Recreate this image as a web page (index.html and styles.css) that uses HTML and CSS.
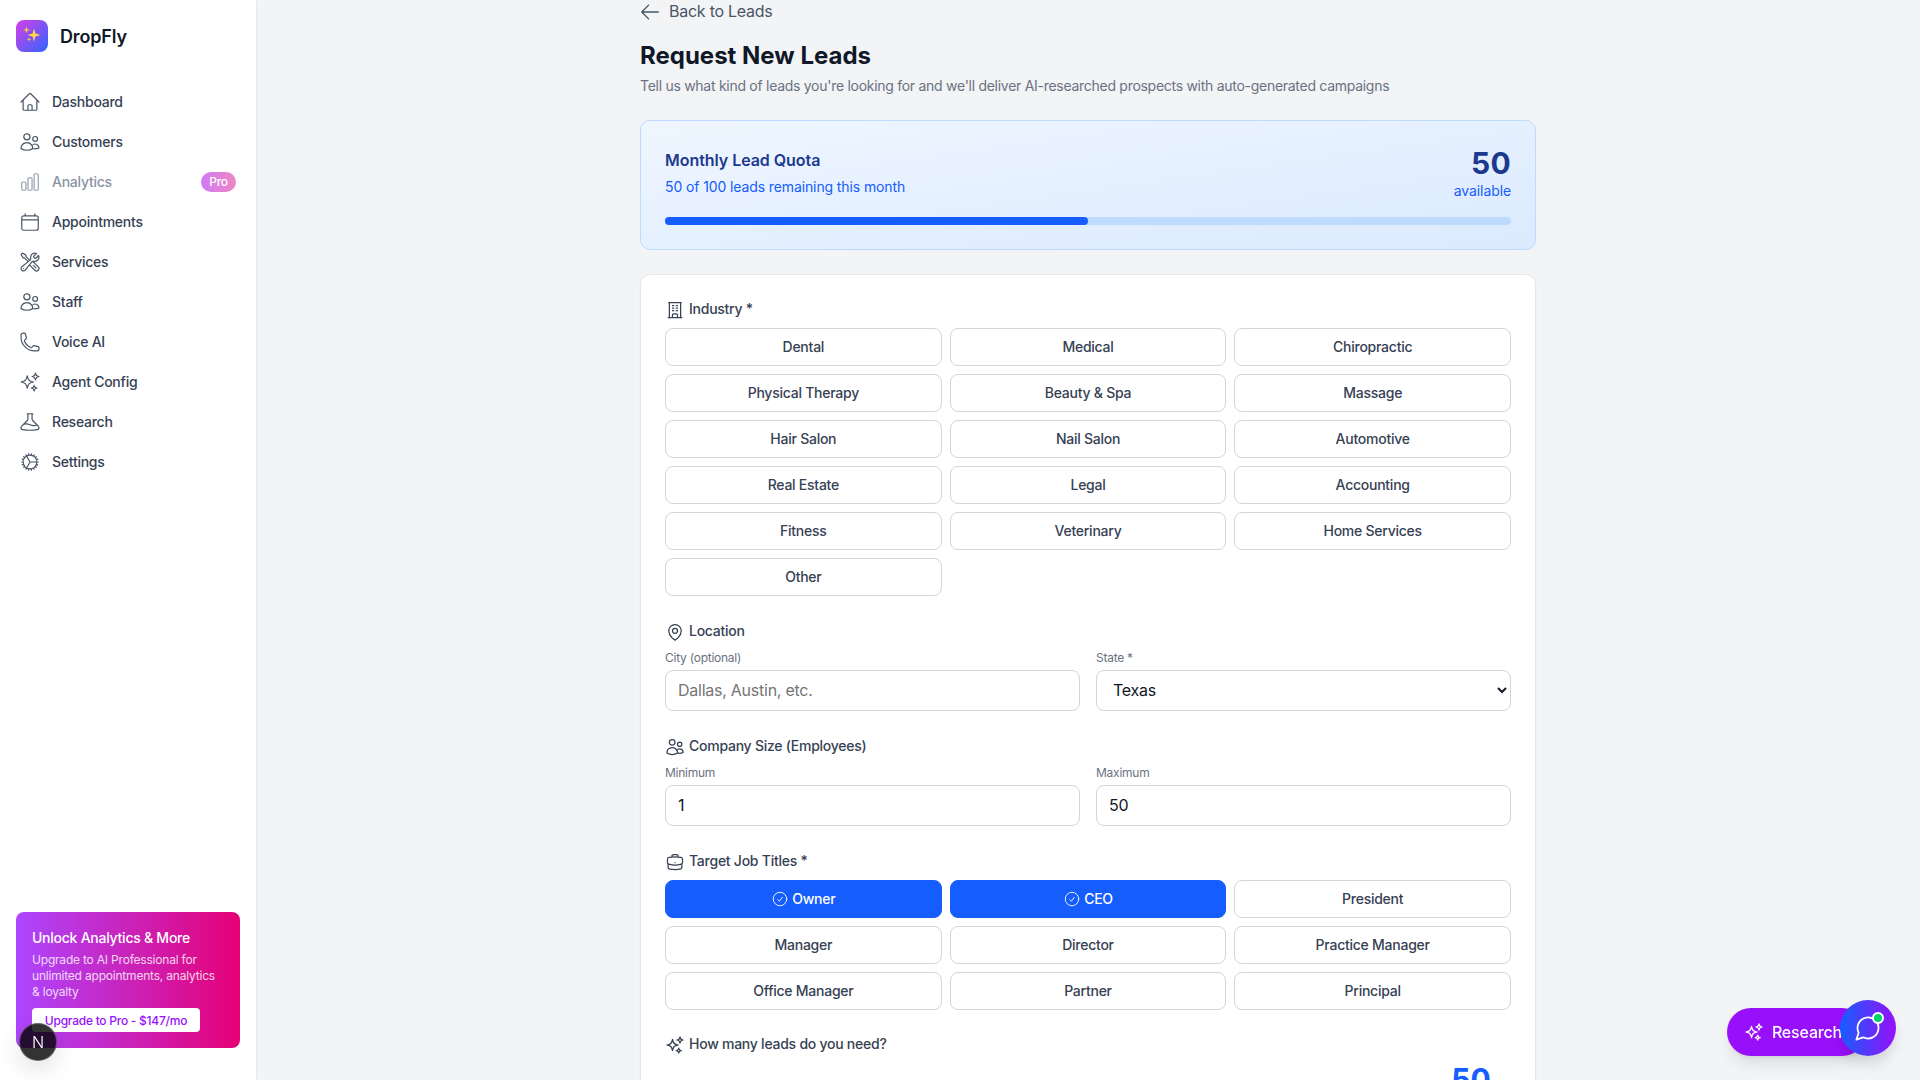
FILE: index.html
```html
<!DOCTYPE html>
<html lang="en">
<head>
    <meta charset="UTF-8">
    <meta name="viewport" content="width=device-width, initial-scale=1.0">
    <title>Request New Leads - DropFly</title>
    <link rel="stylesheet" href="styles.css">
</head>
<body>
    <!-- Icon sprite -->
    <svg class="sprite" xmlns="http://www.w3.org/2000/svg">
        <symbol id="i-home" viewBox="0 0 24 24"><path d="m2.25 12 8.954-8.955c.44-.439 1.152-.439 1.591 0L21.75 12M4.5 9.75v10.125c0 .621.504 1.125 1.125 1.125H9.75v-4.875c0-.621.504-1.125 1.125-1.125h2.25c.621 0 1.125.504 1.125 1.125V21h4.125c.621 0 1.125-.504 1.125-1.125V9.75M8.25 21h8.25"/></symbol>
        <symbol id="i-users" viewBox="0 0 24 24"><path d="M15 19.128a9.38 9.38 0 0 0 2.625.372 9.337 9.337 0 0 0 4.121-.952 4.125 4.125 0 0 0-7.533-2.493M15 19.128v-.003c0-1.113-.285-2.16-.786-3.07M15 19.128v.106A12.318 12.318 0 0 1 8.624 21c-2.331 0-4.512-.645-6.374-1.766l-.001-.109a6.375 6.375 0 0 1 11.964-3.07M12 6.375a3.375 3.375 0 1 1-6.75 0 3.375 3.375 0 0 1 6.75 0Zm8.25 2.25a2.625 2.625 0 1 1-5.25 0 2.625 2.625 0 0 1 5.25 0Z"/></symbol>
        <symbol id="i-chart" viewBox="0 0 24 24"><path d="M3 13.125C3 12.504 3.504 12 4.125 12h2.25c.621 0 1.125.504 1.125 1.125v6.75C7.5 20.496 6.996 21 6.375 21h-2.25A1.125 1.125 0 0 1 3 19.875v-6.75ZM9.75 8.625c0-.621.504-1.125 1.125-1.125h2.25c.621 0 1.125.504 1.125 1.125v11.25c0 .621-.504 1.125-1.125 1.125h-2.25a1.125 1.125 0 0 1-1.125-1.125V8.625ZM16.5 4.125c0-.621.504-1.125 1.125-1.125h2.25C20.496 3 21 3.504 21 4.125v15.75c0 .621-.504 1.125-1.125 1.125h-2.25a1.125 1.125 0 0 1-1.125-1.125V4.125Z"/></symbol>
        <symbol id="i-calendar" viewBox="0 0 24 24"><path d="M6.750 3v2.25M17.25 3v2.25M3 18.75V7.500a2.25 2.25 0 0 1 2.25-2.25h13.5A2.25 2.25 0 0 1 21 7.500v11.25m-18 0A2.25 2.25 0 0 0 5.250 21h13.5A2.25 2.25 0 0 0 21 18.75m-18 0v-9h18v9"/></symbol>
        <symbol id="i-tools" viewBox="0 0 24 24"><path d="M11.42 15.17 17.25 21A2.652 2.652 0 0 0 21 17.25l-5.877-5.877M11.42 15.17l2.496-3.03c.317-.384.74-.626 1.208-.766M11.42 15.17l-4.655 5.653a2.548 2.548 0 1 1-3.586-3.586l6.837-5.63m5.108-.233c.55-.164 1.163-.188 1.743-.14a4.5 4.5 0 0 0 4.486-6.336l-3.276 3.277a3.004 3.004 0 0 1-2.25-2.25l3.276-3.276a4.5 4.5 0 0 0-6.336 4.486c.091 1.076-.071 2.264-.904 2.95l-.102.085m-1.745 1.437L5.909 7.5H4.5L2.25 3.75l1.5-1.5L7.5 4.5v1.409l4.26 4.26m-1.745 1.437 1.745-1.437m6.615 8.206L15.75 15.75M4.867 19.125h.008v.008h-.008v-.008Z"/></symbol>
        <symbol id="i-phone" viewBox="0 0 24 24"><path d="M2.25 6.75c0 8.284 6.716 15 15 15h2.25a2.25 2.25 0 0 0 2.25-2.25v-1.372c0-.516-.351-.966-.852-1.091l-4.423-1.106c-.44-.11-.902.055-1.173.417l-.97 1.293c-.282.376-.769.542-1.21.38a12.035 12.035 0 0 1-7.143-7.143c-.162-.441.004-.928.38-1.21l1.293-.97c.363-.271.527-.734.417-1.173L6.963 3.102a1.125 1.125 0 0 0-1.091-.852H4.5A2.25 2.25 0 0 0 2.25 4.500v2.25Z"/></symbol>
        <symbol id="i-sparkles" viewBox="0 0 24 24"><path d="M9.813 15.904 9 18.75l-.813-2.846a4.5 4.5 0 0 0-3.09-3.09L2.25 12l2.846-.813a4.5 4.5 0 0 0 3.09-3.09L9 5.25l.813 2.846a4.5 4.5 0 0 0 3.09 3.09L15.75 12l-2.846.813a4.5 4.5 0 0 0-3.09 3.09ZM18.259 8.715 18 9.75l-.259-1.035a3.375 3.375 0 0 0-2.455-2.456L14.25 6l1.036-.259a3.375 3.375 0 0 0 2.455-2.456L18 2.25l.259 1.035a3.375 3.375 0 0 0 2.456 2.456L21.75 6l-1.035.259a3.375 3.375 0 0 0-2.456 2.456ZM16.894 20.567 16.5 21.75l-.394-1.183a2.25 2.25 0 0 0-1.423-1.423L13.5 18.75l1.183-.394a2.25 2.25 0 0 0 1.423-1.423l.394-1.183.394 1.183a2.25 2.25 0 0 0 1.423 1.423l1.183.394-1.183.394a2.25 2.25 0 0 0-1.423 1.423Z"/></symbol>
        <symbol id="i-beaker" viewBox="0 0 24 24"><path d="M9.750 3.104v5.714a2.25 2.25 0 0 1-.659 1.591L5 14.5M9.750 3.104c-.251.023-.501.05-.75.082m.75-.082a24.301 24.301 0 0 1 4.5 0m0 0v5.714c0 .597.237 1.17.659 1.591L19.8 15.3M14.25 3.104c.251.023.501.05.75.082M19.8 15.3l-1.57.393A9.065 9.065 0 0 1 12 15a9.065 9.065 0 0 0-6.23-.693L5 14.5m14.8.8 1.402 1.402c1.232 1.232.65 3.318-1.067 3.611A48.309 48.309 0 0 1 12 21c-2.773 0-5.491-.235-8.135-.687-1.718-.293-2.3-2.379-1.067-3.61L5 14.5"/></symbol>
        <symbol id="i-cog" viewBox="0 0 24 24"><path d="M4.500 12a7.5 7.5 0 0 0 15 0m-15 0a7.5 7.5 0 1 1 15 0m-15 0H3m16.5 0H21m-1.5 0H12m-8.457 3.077 1.41-.513m14.095-5.13 1.41-.513M5.106 17.785l1.15-.964m11.49-9.642 1.149-.964M7.501 19.795l.75-1.3m7.5-12.99.75-1.3m-6.063 16.658.26-1.477m2.605-14.772.26-1.477m0 17.726-.26-1.477M10.698 4.614l-.26-1.477M16.5 19.794l-.75-1.299M7.500 4.205 12 12m6.894 5.785-1.149-.964M6.256 7.178l-1.15-.964m15.352 8.864-1.41-.513M4.954 9.435l-1.41-.514M12.002 12l-3.75 6.495"/></symbol>
        <symbol id="i-back" viewBox="0 0 24 24"><path d="M10.5 19.5 3 12m0 0 7.5-7.5M3 12h18"/></symbol>
        <symbol id="i-building" viewBox="0 0 24 24"><path d="M3.750 21h16.5M4.500 3h15M5.250 3v18m13.5-18v18M9 6.750h1.5m-1.5 3h1.5m-1.5 3h1.5m3-6H15m-1.5 3H15m-1.5 3H15M9 21v-3.375c0-.621.504-1.125 1.125-1.125h3.75c.621 0 1.125.504 1.125 1.125V21"/></symbol>
        <symbol id="i-pin" viewBox="0 0 24 24"><path d="M15 10.5a3 3 0 1 1-6 0 3 3 0 0 1 6 0Z"/><path d="M19.5 10.5c0 7.142-7.5 11.25-7.5 11.25S4.500 17.642 4.500 10.5a7.5 7.5 0 1 1 15 0Z"/></symbol>
        <symbol id="i-briefcase" viewBox="0 0 24 24"><path d="M20.25 14.15v4.25c0 1.094-.787 2.036-1.872 2.18-2.087.277-4.216.42-6.378.42s-4.291-.143-6.378-.42c-1.085-.144-1.872-1.086-1.872-2.18v-4.25m16.5 0a2.18 2.18 0 0 0 .75-1.661V8.706c0-1.081-.768-2.015-1.837-2.175a48.114 48.114 0 0 0-3.413-.387m4.5 8.006c-.194.165-.42.295-.673.38A23.978 23.978 0 0 1 12 15.75c-2.648 0-5.195-.429-7.577-1.22a2.016 2.016 0 0 1-.673-.38m0 0A2.18 2.18 0 0 1 3 12.489V8.706c0-1.081.768-2.015 1.837-2.175a48.111 48.111 0 0 1 3.413-.387m7.5 0V5.250A2.25 2.25 0 0 0 13.5 3h-3a2.25 2.25 0 0 0-2.25 2.25v.894m7.5 0a48.667 48.667 0 0 0-7.5 0M12 12.75h.008v.008H12v-.008Z"/></symbol>
        <symbol id="i-check" viewBox="0 0 24 24"><path d="M9 12.75 11.25 15 15 9.750M21 12a9 9 0 1 1-18 0 9 9 0 0 1 18 0Z"/></symbol>
        <symbol id="i-chat" viewBox="0 0 24 24"><path d="M7.9 20A9 9 0 1 0 4 16.1L2 22Z"/></symbol>
    </svg>

    <div class="app">
        <aside class="sidebar">
            <div class="brand">
                <span class="brand-logo">
                    <svg viewBox="0 0 32 32" width="32" height="32">
                        <path class="star" d="M18 8.5l1.4 5.1 5.1 1.4-5.1 1.4-1.4 5.1-1.4-5.1-5.1-1.4 5.1-1.4z"/>
                        <path class="star-sm" d="M10.5 6.500l.8 2.700 2.700.8-2.700.8-.8 2.700-.8-2.700-2.700-.8 2.700-.8z"/>
                        <path class="star-sm" d="M13 17l.6 1.900 1.900.6-1.900.6-.6 1.900-.6-1.900-1.900-.6 1.900-.6z"/>
                    </svg>
                </span>
                <span class="brand-name">DropFly</span>
            </div>

            <nav class="nav">
                <a href="#" class="nav-link"><svg class="nav-icon"><use href="#i-home"/></svg>Dashboard</a>
                <a href="#" class="nav-link"><svg class="nav-icon"><use href="#i-users"/></svg>Customers</a>
                <a href="#" class="nav-link locked"><svg class="nav-icon"><use href="#i-chart"/></svg>Analytics<span class="pro-badge">Pro</span></a>
                <a href="#" class="nav-link"><svg class="nav-icon"><use href="#i-calendar"/></svg>Appointments</a>
                <a href="#" class="nav-link"><svg class="nav-icon"><use href="#i-tools"/></svg>Services</a>
                <a href="#" class="nav-link"><svg class="nav-icon"><use href="#i-users"/></svg>Staff</a>
                <a href="#" class="nav-link"><svg class="nav-icon"><use href="#i-phone"/></svg>Voice AI</a>
                <a href="#" class="nav-link"><svg class="nav-icon"><use href="#i-sparkles"/></svg>Agent Config</a>
                <a href="#" class="nav-link"><svg class="nav-icon"><use href="#i-beaker"/></svg>Research</a>
                <a href="#" class="nav-link"><svg class="nav-icon"><use href="#i-cog"/></svg>Settings</a>
            </nav>

            <div class="promo">
                <h3>Unlock Analytics &amp; More</h3>
                <p>Upgrade to AI Professional for unlimited appointments, analytics &amp; loyalty</p>
                <button class="promo-btn">Upgrade to Pro - $147/mo</button>
            </div>
        </aside>

        <main class="main">
            <div class="content">
                <a href="#" class="back-link"><svg class="back-icon"><use href="#i-back"/></svg>Back to Leads</a>
                <h1>Request New Leads</h1>
                <p class="subtitle">Tell us what kind of leads you're looking for and we'll deliver AI-researched prospects with auto-generated campaigns</p>

                <section class="quota">
                    <div class="quota-head">
                        <div>
                            <h2>Monthly Lead Quota</h2>
                            <p class="quota-note">50 of 100 leads remaining this month</p>
                        </div>
                        <div class="quota-count">
                            <strong>50</strong>
                            <span>available</span>
                        </div>
                    </div>
                    <div class="bar"><div class="bar-fill" style="width: 50%"></div></div>
                </section>

                <form class="form-card">
                    <div class="field">
                        <label class="field-label"><svg class="label-icon"><use href="#i-building"/></svg>Industry *</label>
                        <div class="choices">
                            <button type="button" class="choice">Dental</button>
                            <button type="button" class="choice">Medical</button>
                            <button type="button" class="choice">Chiropractic</button>
                            <button type="button" class="choice">Physical Therapy</button>
                            <button type="button" class="choice">Beauty &amp; Spa</button>
                            <button type="button" class="choice">Massage</button>
                            <button type="button" class="choice">Hair Salon</button>
                            <button type="button" class="choice">Nail Salon</button>
                            <button type="button" class="choice">Automotive</button>
                            <button type="button" class="choice">Real Estate</button>
                            <button type="button" class="choice">Legal</button>
                            <button type="button" class="choice">Accounting</button>
                            <button type="button" class="choice">Fitness</button>
                            <button type="button" class="choice">Veterinary</button>
                            <button type="button" class="choice">Home Services</button>
                            <button type="button" class="choice">Other</button>
                        </div>
                    </div>

                    <div class="field">
                        <label class="field-label"><svg class="label-icon"><use href="#i-pin"/></svg>Location</label>
                        <div class="two-col">
                            <div>
                                <label class="small-label">City (optional)</label>
                                <input type="text" class="text-input" placeholder="Dallas, Austin, etc.">
                            </div>
                            <div>
                                <label class="small-label">State *</label>
                                <select class="select-input">
                                    <option>Texas</option>
                                </select>
                            </div>
                        </div>
                    </div>

                    <div class="field">
                        <label class="field-label"><svg class="label-icon"><use href="#i-users"/></svg>Company Size (Employees)</label>
                        <div class="two-col">
                            <div>
                                <label class="small-label">Minimum</label>
                                <input type="text" class="text-input" value="1">
                            </div>
                            <div>
                                <label class="small-label">Maximum</label>
                                <input type="text" class="text-input" value="50">
                            </div>
                        </div>
                    </div>

                    <div class="field">
                        <label class="field-label"><svg class="label-icon"><use href="#i-briefcase"/></svg>Target Job Titles *</label>
                        <div class="choices">
                            <button type="button" class="choice selected"><svg class="check-icon"><use href="#i-check"/></svg>Owner</button>
                            <button type="button" class="choice selected"><svg class="check-icon"><use href="#i-check"/></svg>CEO</button>
                            <button type="button" class="choice">President</button>
                            <button type="button" class="choice">Manager</button>
                            <button type="button" class="choice">Director</button>
                            <button type="button" class="choice">Practice Manager</button>
                            <button type="button" class="choice">Office Manager</button>
                            <button type="button" class="choice">Partner</button>
                            <button type="button" class="choice">Principal</button>
                        </div>
                    </div>

                    <div class="field">
                        <label class="field-label"><svg class="label-icon"><use href="#i-sparkles"/></svg>How many leads do you need?</label>
                        <div class="lead-count">50</div>
                    </div>
                </form>
            </div>
        </main>
    </div>

    <!-- Floating widgets -->
    <div class="dev-badge">N</div>
    <button class="research-pill"><svg class="pill-icon"><use href="#i-sparkles"/></svg>Research</button>
    <button class="chat-btn">
        <svg class="chat-icon"><use href="#i-chat"/></svg>
        <span class="chat-dot"></span>
    </button>
</body>
</html>
```

FILE: styles.css
```css
/* General Styles */
* {
    margin: 0;
    padding: 0;
    box-sizing: border-box;
}

html, body {
    height: 100%;
    overflow: hidden;
}

body {
    font-family: 'Inter', 'Liberation Sans', sans-serif;
    background-color: #f3f4f6;
    color: #101828;
    letter-spacing: -0.25px;
}

button, input, select {
    font-family: inherit;
    letter-spacing: inherit;
}

a {
    text-decoration: none;
}

.sprite {
    display: none;
}

svg use {
    fill: none;
    stroke: currentColor;
    stroke-width: 1.5;
    stroke-linecap: round;
    stroke-linejoin: round;
}

.app {
    display: flex;
    height: 100vh;
}

/* Sidebar */
.sidebar {
    width: 256px;
    flex-shrink: 0;
    display: flex;
    flex-direction: column;
    background-color: #fff;
    box-shadow: 1px 0 2px rgba(0, 0, 0, 0.05);
}

.brand {
    display: flex;
    align-items: center;
    gap: 12px;
    padding: 20px 16px 30px;
}

.brand-logo {
    width: 32px;
    height: 32px;
    border-radius: 8px;
    background: linear-gradient(135deg, #d63ee8, #2f66ff);
}

.brand-logo svg {
    display: block;
}

.star {
    fill: #ffd84a;
}

.star-sm {
    fill: #ffc93a;
}

.brand-name {
    font-size: 18px;
    font-weight: 600;
    color: #101828;
    letter-spacing: -0.15px;
}

.nav {
    padding: 0 12px;
}

.nav-link {
    display: flex;
    align-items: center;
    gap: 11px;
    height: 40px;
    padding: 0 8px 1px 7px;
    font-size: 14px;
    font-weight: 450;
    color: #364153;
}

.nav-icon {
    width: 22px;
    height: 22px;
    flex-shrink: 0;
    color: #4a5565;
}

.nav-icon use {
    stroke-width: 1.3;
}

.nav-link.locked {
    color: #8a93a3;
}

.nav-link.locked .nav-icon {
    color: #99a1af;
}

.pro-badge {
    margin-left: auto;
    width: 35px;
    height: 20px;
    line-height: 20px;
    text-align: center;
    font-size: 12px;
    color: #fff;
    border-radius: 10px;
    background: linear-gradient(to right, #cf7bf6, #ef86c4);
}

.promo {
    margin: auto 16px 32px;
    padding: 16px;
    border-radius: 8px;
    color: #fff;
    background: linear-gradient(to right, #ad46ff, #e60076);
}

.promo h3 {
    font-size: 14px;
    line-height: 20px;
    font-weight: 450;
    margin-bottom: 4px;
}

.promo p {
    padding-right: 6px;
    font-size: 12px;
    line-height: 16px;
    letter-spacing: -0.2px;
    opacity: 0.8;
    margin-bottom: 8px;
}

.promo-btn {
    display: block;
    width: 168px;
    height: 24px;
    border: none;
    border-radius: 4px;
    background-color: #fff;
    color: #9810fa;
    font-size: 12px;
    font-weight: 450;
}

/* Main content */
.main {
    flex: 1;
    overflow: hidden;
}

.content {
    width: 896px;
    margin: 0 auto;
}

.back-link {
    display: flex;
    align-items: center;
    gap: 8px;
    height: 24px;
    margin-bottom: 16px;
    padding-bottom: 2px;
    font-size: 16px;
    line-height: 22px;
    letter-spacing: -0.25px;
    color: #4a5565;
}

.back-icon {
    width: 22px;
    height: 22px;
    margin: 2px 0 0 -1px;
}

h1 {
    font-size: 24px;
    line-height: 32px;
    font-weight: 700;
    letter-spacing: 0;
    color: #101828;
}

.subtitle {
    margin-top: 4px;
    font-size: 14px;
    line-height: 20px;
    letter-spacing: -0.28px;
    color: #6a7282;
}

/* Quota card */
.quota {
    margin-top: 24px;
    height: 130px;
    padding: 24px;
    border: 1px solid #bedbff;
    border-radius: 10px;
    background: linear-gradient(to bottom right, #eff6ff, #dbeafe);
}

.quota-head {
    display: flex;
    justify-content: space-between;
    margin-bottom: 16px;
}

.quota h2 {
    padding-top: 1px;
    font-size: 16px;
    line-height: 28px;
    font-weight: 600;
    letter-spacing: -0.05px;
    color: #1c398e;
}

.quota-note {
    margin-top: 3px;
    font-size: 14px;
    line-height: 20px;
    letter-spacing: -0.11px;
    color: #155dfc;
}

.quota-count {
    text-align: right;
}

.quota-count strong {
    display: block;
    font-size: 30px;
    line-height: 36px;
    font-weight: 700;
    letter-spacing: 0.3px;
    color: #1c398e;
}

.quota-count span {
    display: block;
    font-size: 14px;
    line-height: 20px;
    letter-spacing: -0.1px;
    color: #155dfc;
}

.bar {
    height: 8px;
    border-radius: 4px;
    background-color: #bedbff;
}

.bar-fill {
    height: 100%;
    border-radius: 4px;
    background-color: #155dfc;
}

/* Form */
.form-card {
    margin-top: 24px;
    padding: 24px;
    border: 1px solid #e5e7eb;
    border-radius: 10px;
    background-color: #fff;
    box-shadow: 0 1px 2px rgba(0, 0, 0, 0.05);
}

.field {
    margin-bottom: 24.5px;
}

.field-label {
    display: block;
    height: 29px;
    font-size: 14px;
    line-height: 20px;
    font-weight: 450;
    color: #364153;
}

.label-icon {
    width: 20px;
    height: 20px;
    margin-right: 4px;
    vertical-align: -6px;
}

.choices {
    display: grid;
    grid-template-columns: repeat(3, 1fr);
    gap: 8px;
}

.choice {
    display: flex;
    align-items: center;
    justify-content: center;
    gap: 3px;
    height: 38px;
    padding-bottom: 1px;
    border: 1px solid #d1d5dc;
    border-radius: 8px;
    background-color: #fff;
    font-size: 14px;
    font-weight: 450;
    color: #364153;
}

.choice.selected {
    border-color: #155dfc;
    background-color: #155dfc;
    color: #fff;
}

.check-icon {
    width: 18px;
    height: 18px;
    margin-top: 1px;
}

.check-icon use {
    stroke-width: 1.2;
}

.two-col {
    display: grid;
    grid-template-columns: 1fr 1fr;
    gap: 16px;
}

.small-label {
    display: block;
    margin-bottom: 4px;
    font-size: 12px;
    line-height: 16px;
    color: #6a7282;
}

.text-input {
    display: block;
    width: 100%;
    height: 41.5px;
    padding: 8px 12px;
    border: 1px solid #d1d5dc;
    border-radius: 8px;
    background-color: #fff;
    font-size: 16px;
    line-height: 24px;
    color: #101828;
}

.select-input {
    display: block;
    width: 100%;
    height: 41px;
    padding: 8px 12px;
    border: 1px solid #d1d5dc;
    border-radius: 8px;
    background-color: #fff;
    font-size: 16px;
    color: #101828;
}

.lead-count {
    margin-top: -2px;
    padding-right: 20px;
    text-align: right;
    font-size: 30px;
    line-height: 36px;
    font-weight: 700;
    letter-spacing: 0.2px;
    color: #155dfc;
}

/* Floating widgets */
.dev-badge {
    position: fixed;
    left: 19px;
    top: 1023px;
    width: 38px;
    height: 38px;
    line-height: 36px;
    text-align: center;
    border: 1px solid rgba(255, 255, 255, 0.25);
    border-radius: 50%;
    background-color: rgba(0, 0, 0, 0.8);
    color: #fff;
    font-size: 16px;
    font-weight: 300;
    box-shadow: 0 8px 24px rgba(0, 0, 0, 0.12);
}

.research-pill {
    position: fixed;
    right: 54px;
    bottom: 24px;
    display: flex;
    align-items: center;
    gap: 8px;
    height: 48px;
    padding: 0 24px 0 17px;
    border: none;
    border-radius: 24px;
    background-color: #9810fa;
    color: #fff;
    font-size: 16px;
    font-weight: 450;
    letter-spacing: -0.18px;
    box-shadow: 0 10px 15px -3px rgba(0, 0, 0, 0.1), 0 4px 6px -4px rgba(0, 0, 0, 0.1);
}

.pill-icon {
    width: 20px;
    height: 20px;
}

.chat-btn {
    position: fixed;
    right: 24px;
    bottom: 24px;
    display: flex;
    align-items: center;
    justify-content: center;
    width: 56px;
    height: 56px;
    border: none;
    border-radius: 50%;
    background: linear-gradient(to right, #155dfc, #9810fa);
    color: #fff;
    box-shadow: 0 10px 15px -3px rgba(0, 0, 0, 0.15);
}

.chat-icon {
    width: 28px;
    height: 28px;
}

.chat-dot {
    position: absolute;
    top: 12px;
    right: 12px;
    width: 12px;
    height: 12px;
    border: 2px solid #fff;
    border-radius: 50%;
    background-color: #00d26a;
}
```
